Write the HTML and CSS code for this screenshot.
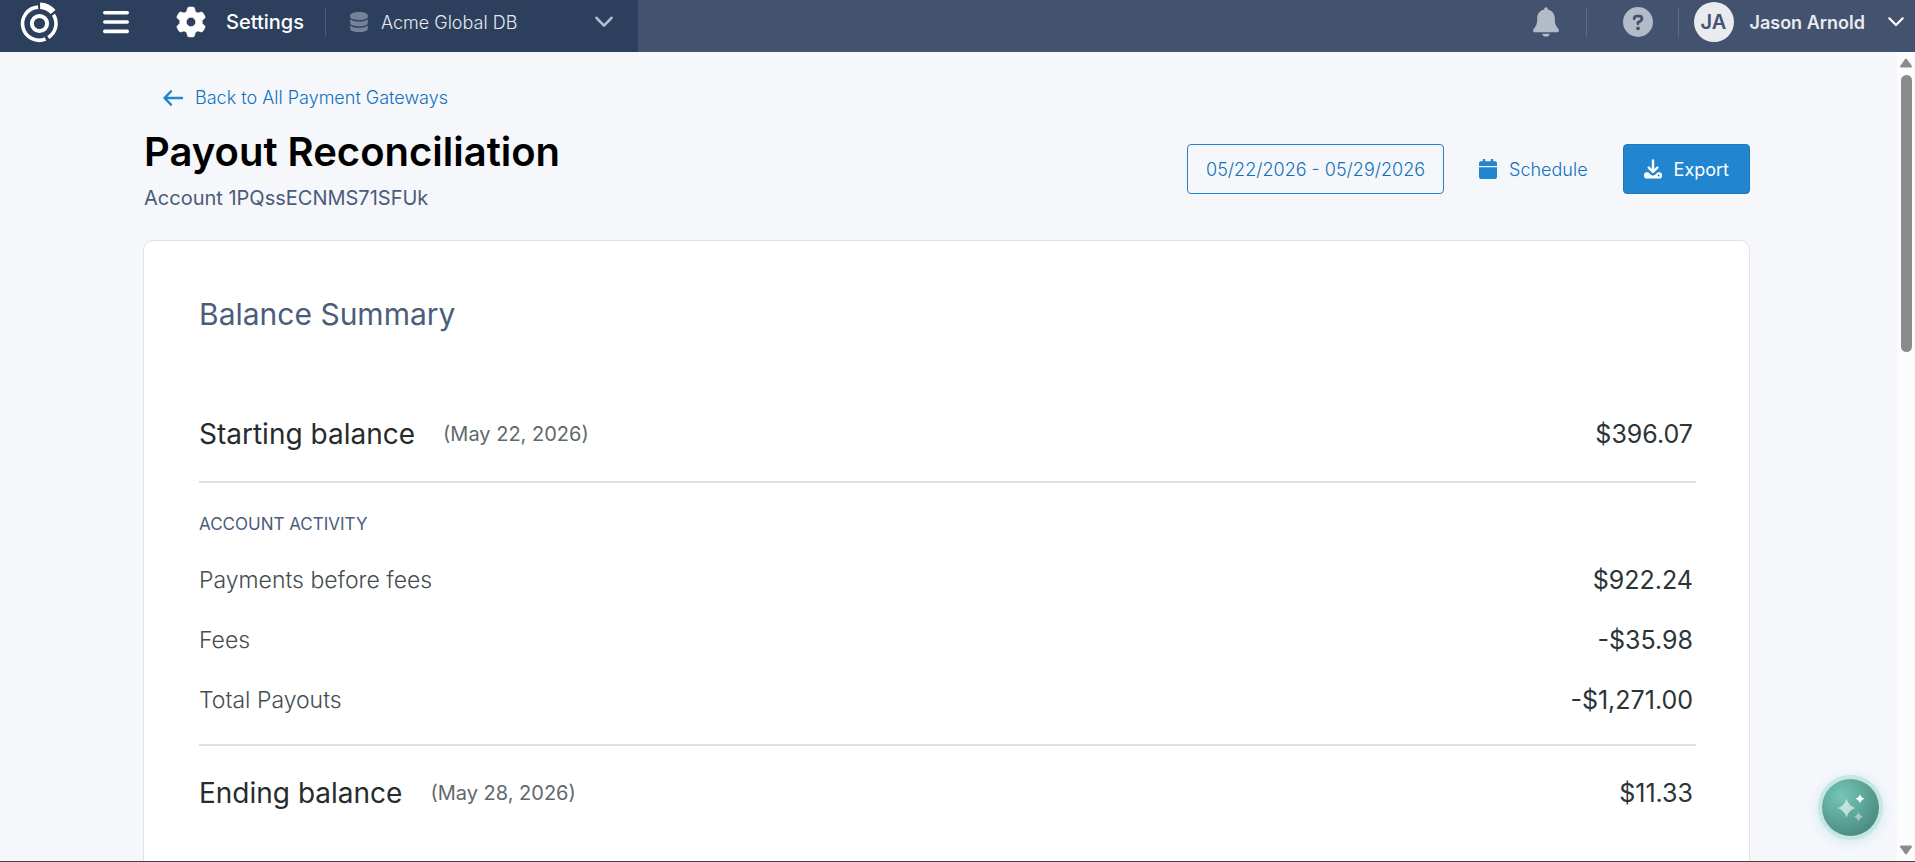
FILE: index.html
```html
<!DOCTYPE html>
<html lang="en">
<head>
    <meta charset="UTF-8">
    <title>Payout Reconciliation</title>
    <link rel="stylesheet" href="styles.css">
</head>
<body>
    <header class="topbar">
        <div class="topbar-left">
            <a href="#" class="logo" aria-label="Home">
                <svg width="40" height="42" viewBox="0 0 40 42">
                    <circle cx="19.500" cy="22.500" r="7.600" fill="none" stroke="#fff" stroke-width="4"/>
                    <path d="M18.100 6.100A16.600 16.600 0 1 0 25.500 38" fill="none" stroke="#fff" stroke-width="3.600"/>
                    <path d="M28.300 36.500A16.600 16.600 0 0 0 33.500 13.700" fill="none" stroke="#fff" stroke-width="3.600"/>
                    <path d="M20.100 1.500A21 21 0 0 1 35.500 9.100L30.700 13.100A15 15 0 0 0 20.100 8.100z" fill="#fff"/>
                </svg>
            </a>
            <button class="icon-button menu-button" aria-label="Menu">
                <svg width="26" height="24" viewBox="0 0 26 24" stroke="#fff" stroke-width="3.6" stroke-linecap="round">
                    <path d="M1.8 2.8h22.4M1.8 12h22.4M1.8 21.4h22.4"/>
                </svg>
            </button>
            <a href="#" class="section-link">
                <svg width="32" height="30" viewBox="-16 0 544 512" fill="#fff">
                    <path d="M495.9 166.6c3.2 8.7.5 18.4-6.4 24.6l-43.3 39.4c1.1 8.3 1.7 16.8 1.7 25.4s-.6 17.100-1.700 25.400l43.300 39.400c6.900 6.200 9.600 15.900 6.400 24.600-4.400 11.900-9.700 23.300-15.800 34.300l-4.700 8.100c-6.600 11-14 21.400-22.100 31.200-5.900 7.200-15.700 9.600-24.500 6.800l-55.700-17.700c-13.400 10.300-28.200 18.900-44 25.400l-12.500 57.100c-2 9.100-9 16.300-18.200 17.800-13.800 2.300-28 3.500-42.500 3.500s-28.700-1.200-42.500-3.500c-9.200-1.500-16.200-8.700-18.200-17.800l-12.500-57.100c-15.800-6.500-30.600-15.100-44-25.400l-55.600 17.800c-8.800 2.800-18.600.3-24.500-6.800-8.100-9.800-15.500-20.200-22.100-31.200l-4.700-8.100c-6.100-11-11.400-22.400-15.800-34.300-3.200-8.700-.5-18.400 6.400-24.600l43.300-39.400c-1.100-8.400-1.700-16.900-1.700-25.500s.6-17.100 1.700-25.400l-43.300-39.400c-6.900-6.200-9.600-15.900-6.400-24.600 4.400-11.900 9.700-23.300 15.800-34.300l4.700-8.100c6.600-11 14-21.400 22.100-31.200 5.900-7.200 15.700-9.600 24.500-6.800l55.700 17.700c13.400-10.300 28.200-18.900 44-25.400l12.500-57.100c2-9.100 9-16.300 18.200-17.800C227.300 1.200 241.500 0 256 0s28.700 1.200 42.500 3.500c9.200 1.500 16.200 8.700 18.200 17.800l12.500 57.100c15.800 6.500 30.600 15.100 44 25.400l55.700-17.700c8.800-2.800 18.600-.3 24.500 6.800 8.100 9.800 15.500 20.200 22.100 31.200l4.700 8.100c6.100 11 11.400 22.400 15.800 34.300zM256 336a80 80 0 1 0 0-160 80 80 0 1 0 0 160z" stroke="#fff" stroke-width="10"/>
                </svg>
                Settings
            </a>
            <span class="divider"></span>
            <button class="db-select">
                <svg width="18" height="20" viewBox="0 0 448 512" fill="#75839a">
                    <path d="M448 80v48c0 44.200-100.300 80-224 80S0 172.200 0 128V80C0 35.800 100.300 0 224 0s224 35.800 224 80zM393.200 214.700c20.800-7.400 39.900-16.900 54.800-28.600V288c0 44.200-100.300 80-224 80S0 332.200 0 288V186.100c14.900 11.800 34 21.200 54.800 28.600C99.700 230.700 159.500 240 224 240s124.300-9.300 169.200-25.300zM0 346.100c14.900 11.800 34 21.200 54.800 28.600C99.700 390.700 159.500 400 224 400s124.300-9.300 169.200-25.300c20.800-7.400 39.900-16.900 54.800-28.600V432c0 44.200-100.300 80-224 80S0 476.200 0 432z"/>
                </svg>
                <span class="db-name">Acme Global DB</span>
                <svg width="18" height="12" viewBox="0 0 18 12" fill="none" stroke="#b6bfcc" stroke-width="2.6" stroke-linecap="round" stroke-linejoin="round">
                    <path d="M1.500 1.800l7.500 7.800 7.500-7.800"/>
                </svg>
            </button>
        </div>
        <div class="topbar-right">
            <button class="icon-button bell-button" aria-label="Notifications">
                <svg width="26" height="30" viewBox="0 0 448 512" fill="#b4bbc8">
                    <path d="M224 0c-17.700 0-32 14.300-32 32v8C119 55 72 118 72 192v33c0 47-15 92-42 127l-22 30c-8 10-10 22-5 33s16 17 29 17h384c13 0 24-6 29-17s3-23-5-33l-22-30c-27-35-42-80-42-127v-33c0-74-47-137-120-152v-8c0-17.700-14.300-32-32-32zM160 458h128c0 17-7 30-19 40s-28 14-45 14-33-4-45-14-19-23-19-40z"/>
                </svg>
            </button>
            <span class="divider"></span>
            <button class="icon-button help-button" aria-label="Help">
                <svg width="30" height="30" viewBox="0 0 30 30">
                    <circle cx="15" cy="15" r="15" fill="#b4bbc8"/>
                    <path d="M11.200 11.800v-.4c0-1.200 1-2.200 2.200-2.200h3c1.400 0 2.500 1.100 2.500 2.500 0 .9-.5 1.700-1.200 2.200L15 15.500v1.300" fill="none" stroke="#43536f" stroke-width="2.800" stroke-linecap="round" stroke-linejoin="round"/>
                    <circle cx="15" cy="21.300" r="1.900" fill="#43536f"/>
                </svg>
            </button>
            <span class="divider"></span>
            <button class="user-menu">
                <span class="avatar">JA</span>
                <span class="user-name">Jason Arnold</span>
                <svg width="16" height="10" viewBox="0 0 16 10" fill="none" stroke="#fff" stroke-width="2.200" stroke-linecap="round" stroke-linejoin="round">
                    <path d="M1.300 1.300L8 8l6.700-6.700"/>
                </svg>
            </button>
        </div>
    </header>

    <div class="viewport">
        <main class="page">
            <a href="#" class="back-link">
                <svg width="20" height="16" viewBox="0 0 20 16" fill="none" stroke="#2185d0" stroke-width="2.400" stroke-linecap="round" stroke-linejoin="round">
                    <path d="M19 8H1.500M8 1.300L1.500 8 8 14.700"/>
                </svg>
                Back to All Payment Gateways
            </a>
            <div class="page-header">
                <div>
                    <h1>Payout Reconciliation</h1>
                    <p class="account">Account 1PQssECNMS71SFUk</p>
                </div>
                <div class="actions">
                    <button class="btn btn-outline">05/22/2026 - 05/29/2026</button>
                    <button class="btn btn-text">
                        <svg width="18" height="20" viewBox="0 0 18 20" fill="#2185d0">
                            <path d="M3.800 0h2.400v2.200h5.600V0h2.400v2.200H16a2 2 0 0 1 2 2V7H0V4.200a2 2 0 0 1 2-2h1.800zM0 8.300h18V18a2 2 0 0 1-2 2H2a2 2 0 0 1-2-2z"/>
                        </svg>
                        Schedule
                    </button>
                    <button class="btn btn-primary">
                        <svg width="18" height="20" viewBox="0 0 18 20" fill="none" stroke="#fff" stroke-width="2.400" stroke-linecap="round" stroke-linejoin="round">
                            <path d="M9 1.500v11M4.700 8.600L9 12.800l4.300-4.200"/>
                            <path d="M2.400 13.200h1.800l2.700 2.600c1.200 1.100 3 1.100 4.200 0l2.700-2.600h1.800c1.300 0 2.400 1 2.400 2.400V17c0 1.500-1 2.600-2.400 2.600H2.400C1 19.600 0 18.500 0 17v-1.400c0-1.400 1.100-2.400 2.400-2.400z" fill="#fff" stroke="none"/>
                            <circle cx="14.600" cy="16.400" r="1" fill="#2185d0" stroke="none"/>
                        </svg>
                        Export
                    </button>
                </div>
            </div>

            <section class="card">
                <h2>Balance Summary</h2>
                <dl class="balance">
                    <div class="row total-row">
                        <dt>Starting balance <span class="date">(May 22, 2026)</span></dt>
                        <dd>$396.07</dd>
                    </div>
                </dl>
                <h3>ACCOUNT ACTIVITY</h3>
                <dl class="activity">
                    <div class="row">
                        <dt>Payments before fees</dt>
                        <dd>$922.24</dd>
                    </div>
                    <div class="row">
                        <dt>Fees</dt>
                        <dd>-$35.98</dd>
                    </div>
                    <div class="row">
                        <dt>Total Payouts</dt>
                        <dd>-$1,271.00</dd>
                    </div>
                </dl>
                <dl>
                    <div class="row total-row">
                        <dt>Ending balance <span class="date">(May 28, 2026)</span></dt>
                        <dd>$11.33</dd>
                    </div>
                </dl>
            </section>
        </main>
        <div class="scrollbar" aria-hidden="true">
            <svg width="14" height="10" viewBox="0 0 14 10" fill="#8b8b8b"><path d="M6 1.200q1-1.400 2 0l4.700 6.600q.8 1.700-.9 1.700H2.200q-1.700 0-.9-1.700z"/></svg>
            <div class="track"><div class="thumb"></div></div>
            <svg width="14" height="10" viewBox="0 0 14 10" fill="#8b8b8b"><path d="M6 8.800q1 1.400 2 0l4.700-6.600Q13.500.5 11.800.5H2.200Q.5.500 1.300 2.200z"/></svg>
        </div>
    </div>

    <button class="assistant" aria-label="Assistant">
        <svg width="28" height="26" viewBox="0 0 28 26" fill="#fff">
            <path d="M9.500 3.500q2 7.500 9 9.500-7 2-9 9.500-2-7.500-9-9.500 7-2 9-9.500z" opacity=".6"/>
            <path d="M23-1q1 3.800 4.500 4.700-3.500 1-4.500 4.800-1-3.800-4.500-4.800 3.500-.9 4.500-4.700z"/>
            <path d="M21.500 17q1 3.800 4.500 4.700-3.500 1-4.500 4.800-1-3.800-4.500-4.800 3.500-.9 4.500-4.700z" opacity=".45"/>
        </svg>
    </button>
</body>
</html>
```
FILE: styles.css
```css
* {
    box-sizing: border-box;
}
body {
    margin: 0;
    height: 100vh;
    display: flex;
    flex-direction: column;
    font-family: Inter, "Liberation Sans", sans-serif;
    font-size: 18px;
    background-color: #f5f7fb;
    border-bottom: 1px solid #444;
    overflow: hidden;
}
h1, h2, h3, p, dl, dd {
    margin: 0;
}
a {
    text-decoration: none;
}
button {
    font: inherit;
    border: none;
    background: none;
    padding: 0;
    cursor: pointer;
}
svg {
    display: block;
    flex: none;
    overflow: visible;
}

/* top bar */
.topbar {
    flex: none;
    height: 52px;
    display: flex;
    justify-content: space-between;
    background-color: #43536f;
}
.topbar-left, .topbar-right {
    display: flex;
    align-items: center;
    padding-bottom: 8px;
}
.topbar-left {
    width: 638px;
    padding-left: 20px;
    padding-right: 25px;
    background-color: #2c3f5d;
}
.menu-button {
    margin: 0 46px 0 43px;
}
.section-link {
    display: flex;
    align-items: center;
    gap: 19px;
    color: #fff;
    font-size: 20px;
    font-weight: 500;
}
.divider {
    width: 1px;
    height: 30px;
    background-color: #5d6b84;
}
.topbar-left .divider {
    margin: 0 24px 0 21px;
    background-color: #4a5b76;
}
.db-select {
    flex: 1;
    display: flex;
    align-items: center;
    gap: 13px;
}
.db-name {
    flex: 1;
    text-align: left;
    font-weight: 300;
    color: #e6e9ee;
}
.topbar-right {
    padding-right: 11px;
}
.bell-button {
    margin-right: 27px;
}
.help-button {
    margin: 0 25px 0 36px;
}
.user-menu {
    display: flex;
    align-items: center;
    margin-left: 15px;
    color: #e9ebee;
    font-weight: 600;
}
.avatar {
    width: 40px;
    height: 40px;
    line-height: 40px;
    border-radius: 50%;
    background-color: #e9ebee;
    color: #43536f;
    font-size: 20px;
}
.user-name {
    margin: 0 23px 0 16px;
}

/* page */
.viewport {
    flex: 1;
    min-height: 0;
    display: flex;
}
.page {
    flex: 1;
    padding: 34px 147px 0 143px;
    overflow: hidden;
}
.back-link {
    display: flex;
    align-items: center;
    gap: 12px;
    padding-left: 20px;
    line-height: 24px;
    font-weight: 300;
    color: #1072be;
}
.page-header {
    display: flex;
    justify-content: space-between;
    align-items: center;
    margin: 18px 0 28px;
    padding-left: 1px;
}
h1 {
    font-size: 40px;
    line-height: 48px;
    font-weight: 600;
    color: #000;
}
.account {
    margin-top: 8px;
    font-size: 20px;
    line-height: 28px;
    color: #4a5c7a;
}
.actions {
    display: flex;
    padding-bottom: 2px;
}
.btn {
    display: flex;
    align-items: center;
    gap: 12px;
    height: 50px;
    padding: 0 20px;
    border: 1px solid transparent;
    border-radius: 4px;
    font-weight: 300;
    color: #1072be;
}
.btn-outline {
    padding: 0 18px;
    border-color: #2185d0;
}
.btn-text {
    padding: 0 20px;
    margin: 0 14px;
}
.btn-primary {
    background-color: #2185d0;
    border-color: #1f78bd;
    color: #fff;
    font-weight: 400;
}

/* balance card */
.card {
    padding: 54px 53px 80px 55px;
    background-color: #fff;
    border: 1px solid #e2e3e5;
    border-radius: 10px;
}
h2 {
    margin-bottom: 54px;
    font-size: 30px;
    line-height: 38px;
    font-weight: 400;
    color: #4a5d7b;
}
.row {
    display: flex;
    justify-content: space-between;
    align-items: center;
    height: 60px;
    padding-right: 3px;
    font-size: 23px;
    font-weight: 300;
    color: #454d51;
}
.row dd {
    font-size: 25px;
    font-weight: 400;
    color: #2b3437;
}
.total-row {
    height: 94px;
}
.total-row dt {
    display: flex;
    align-items: center;
    gap: 28px;
    font-size: 28px;
    font-weight: 400;
    color: #262c2e;
}
.date {
    font-size: 20px;
    color: #5f686c;
}
.balance, .activity {
    border-bottom: 2px solid #e0e1e2;
}
h3 {
    padding-top: 30px;
    font-size: 17px;
    line-height: 22px;
    font-weight: 400;
    color: #4a5d7b;
}
.activity {
    padding: 15px 0 14px;
}

/* scrollbar */
.scrollbar {
    width: 18px;
    display: flex;
    flex-direction: column;
    align-items: center;
    padding: 6px 0;
    background-color: #fcfcfc;
}
.track {
    flex: 1;
    padding-top: 7px;
}
.thumb {
    width: 11px;
    height: 36%;
    border-radius: 6px;
    background-color: #8b8b8b;
}

.assistant {
    position: fixed;
    right: 36px;
    bottom: 26px;
    width: 57px;
    height: 57px;
    display: flex;
    align-items: center;
    justify-content: center;
    border-radius: 50%;
    background: radial-gradient(circle at 35% 30%, #74c7b5, #3f7a70);
    box-shadow: 0 0 0 4px #c5e6e3, 0 2px 12px 4px #cdeae8;
}
```
